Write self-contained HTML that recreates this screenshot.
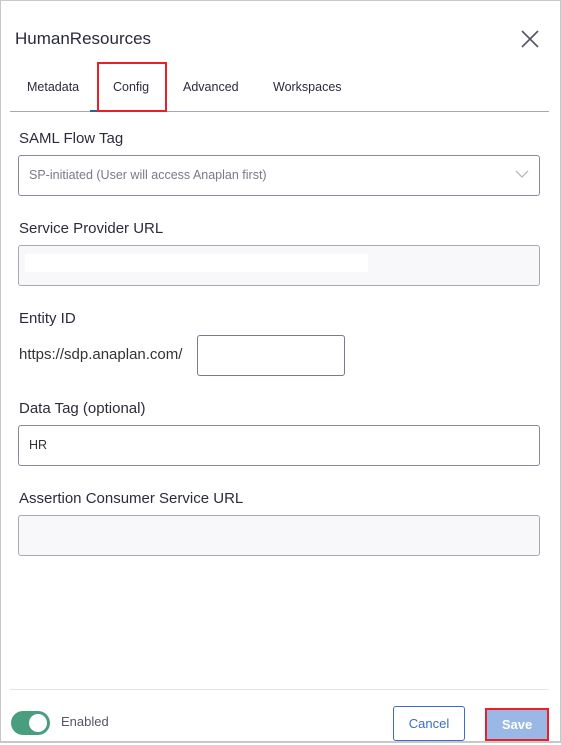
<!DOCTYPE html><html><head><style>
body{margin:0;width:561px;height:745px;position:relative;background:#fff;font-family:"Liberation Sans",sans-serif;color:#2b2b3d;overflow:hidden}
.a{position:absolute}
.lbl{position:absolute;left:19px;font-size:15px;color:#2b2b3d}
.box{position:absolute;left:18px;width:520px;height:39px;border:1px solid #8a8a98;border-radius:3px;background:#fff}
.gray{background:#f8f8fa;border-color:#a8a8b4}
</style></head><body>
<div class="a" style="left:0;top:0;width:559px;height:740px;border:1px solid #c8c8c8;border-bottom:2px solid #c8c8c8"></div>
<div class="a" style="left:15px;top:29px;font-size:17px;color:#2a2a3e">HumanResources</div>
<svg class="a" style="left:521px;top:30px" width="18" height="18"><path d="M1 1L17 17M17 1L1 17" stroke="#555566" stroke-width="1.6"/></svg>
<div class="a" style="left:27px;top:80px;font-size:12.5px">Metadata</div>
<div class="a" style="left:113px;top:80px;font-size:12.5px">Config</div>
<div class="a" style="left:183px;top:80px;font-size:12.5px">Advanced</div>
<div class="a" style="left:273px;top:80px;font-size:12.5px">Workspaces</div>
<div class="a" style="left:10px;top:111px;width:539px;height:1px;background:#a8a8bc"></div>
<div class="a" style="left:90px;top:110px;width:66px;height:2px;background:#2e5fa8"></div>
<div class="a" style="left:97px;top:62px;width:66px;height:46px;border:2px solid #e8202a"></div>
<div class="lbl" style="top:130px">SAML Flow Tag</div>
<div class="box" style="top:155px"></div>
<div class="a" style="left:29px;top:168px;font-size:12.5px;color:#7a7a88">SP-initiated (User will access Anaplan first)</div>
<svg class="a" style="left:515px;top:170px" width="14" height="9"><path d="M1 1L7 7L13 1" stroke="#b0b0b8" fill="none" stroke-width="1.2"/></svg>
<div class="lbl" style="top:220px">Service Provider URL</div>
<div class="box gray" style="top:245px"></div>
<div class="a" style="left:25px;top:254px;width:343px;height:18px;background:#fff"></div>
<div class="lbl" style="top:310px">Entity ID</div>
<div class="a" style="left:19px;top:346px;font-size:15px;color:#333">https://sdp.anaplan.com/</div>
<div class="a" style="left:197px;top:335px;width:146px;height:39px;border:1px solid #7a7a8c;border-radius:3px"></div>
<div class="lbl" style="top:400px">Data Tag (optional)</div>
<div class="box" style="top:425px"></div>
<div class="a" style="left:29px;top:438px;font-size:12.5px;color:#333">HR</div>
<div class="lbl" style="top:490px">Assertion Consumer Service URL</div>
<div class="box gray" style="top:515px"></div>
<div class="a" style="left:10px;top:689px;width:539px;height:1px;background:#e4e4ec"></div>
<div class="a" style="left:11px;top:711px;width:39px;height:24px;border-radius:12px;background:#4a9e80"></div>
<div class="a" style="left:29px;top:714px;width:18px;height:18px;border-radius:50%;background:#fff"></div>
<div class="a" style="left:61px;top:714px;font-size:13px;color:#555566">Enabled</div>
<div class="a" style="left:393px;top:706px;width:70px;height:33px;border:1px solid #3a6cc8;border-radius:3px;background:#fff;color:#3a6cc8;font-size:13px;text-align:center;line-height:33px">Cancel</div>
<div class="a" style="left:485px;top:708px;width:60px;height:29px;border:2px solid #e8202a;background:#9ab8e6;color:#fff;font-size:13px;font-weight:bold;text-align:center;line-height:29px">Save</div>
</body></html>
